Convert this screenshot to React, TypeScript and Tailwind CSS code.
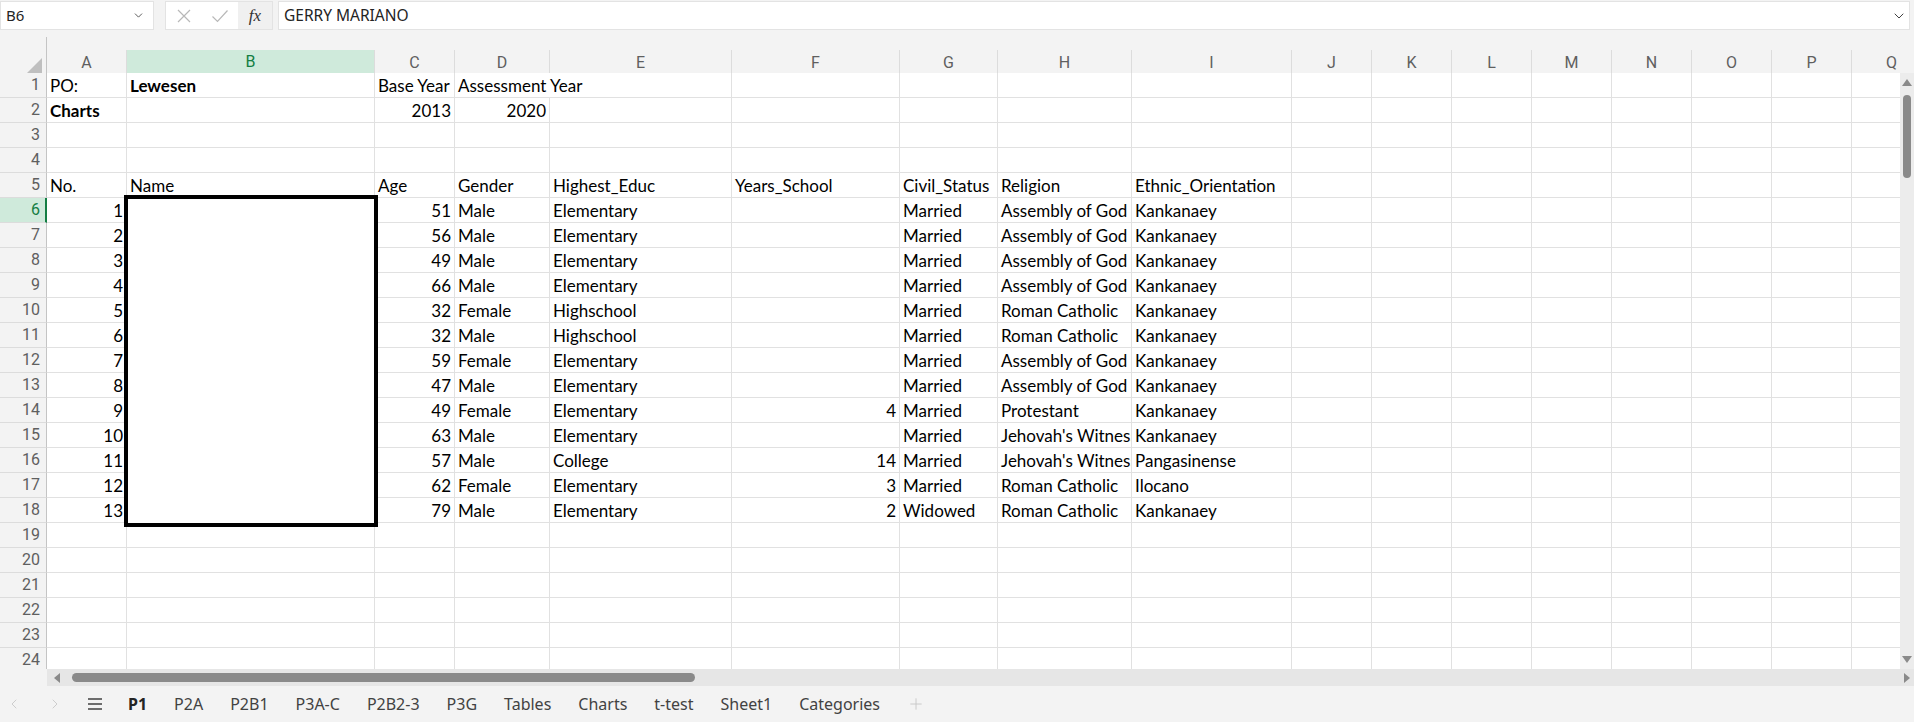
import React from "react";
import { ChevronDown, ChevronLeft, ChevronRight, Plus } from "lucide-react";

const GRID =
  "grid grid-cols-[47px_80px_248px_80px_95px_182px_168px_98px_134px_160px_80px_80px_80px_80px_80px_80px_80px_80px]";

const LETTERS = ["A", "B", "C", "D", "E", "F", "G", "H", "I", "J", "K", "L", "M", "N", "O", "P", "Q"];

type Cell = string;

const people: Cell[][] = [
  ["1", "", "51", "Male", "Elementary", "", "Married", "Assembly of God", "Kankanaey"],
  ["2", "", "56", "Male", "Elementary", "", "Married", "Assembly of God", "Kankanaey"],
  ["3", "", "49", "Male", "Elementary", "", "Married", "Assembly of God", "Kankanaey"],
  ["4", "", "66", "Male", "Elementary", "", "Married", "Assembly of God", "Kankanaey"],
  ["5", "", "32", "Female", "Highschool", "", "Married", "Roman Catholic", "Kankanaey"],
  ["6", "", "32", "Male", "Highschool", "", "Married", "Roman Catholic", "Kankanaey"],
  ["7", "", "59", "Female", "Elementary", "", "Married", "Assembly of God", "Kankanaey"],
  ["8", "", "47", "Male", "Elementary", "", "Married", "Assembly of God", "Kankanaey"],
  ["9", "", "49", "Female", "Elementary", "4", "Married", "Protestant", "Kankanaey"],
  ["10", "", "63", "Male", "Elementary", "", "Married", "Jehovah's Witnesses", "Kankanaey"],
  ["11", "", "57", "Male", "College", "14", "Married", "Jehovah's Witnesses", "Pangasinense"],
  ["12", "", "62", "Female", "Elementary", "3", "Married", "Roman Catholic", "Ilocano"],
  ["13", "", "79", "Male", "Elementary", "2", "Widowed", "Roman Catholic", "Kankanaey"],
];

const rows: Cell[][] = [
  ["PO:", "Lewesen", "Base Year", "Assessment Year"],
  ["Charts", "", "2013", "2020"],
  [],
  [],
  ["No.", "Name", "Age", "Gender", "Highest_Educ", "Years_School", "Civil_Status", "Religion", "Ethnic_Orientation"],
  ...people,
  [],
  [],
  [],
  [],
  [],
  [],
];

const BOLD = new Set(["Lewesen", "Charts"]);

function DataRow({ n, cells }: { n: number; cells: Cell[] }) {
  const active = n === 6;
  return (
    <div className={`${GRID} h-[25px] shrink-0`}>
      <div
        className={
          active
            ? "h-full bg-[#cfeadb] border-r-2 border-r-[#137e43] border-b border-b-[#dcdcdc] flex items-center justify-end pr-[5px] text-[#137e43]"
            : "h-full bg-[#f3f3f3] border-r border-r-[#c4c4c4] border-b border-b-[#dcdcdc] flex items-center justify-end pr-[6px] text-[#5f5f5f]"
        }
        style={{ fontFamily: "Roboto, 'Liberation Sans', sans-serif" }}
      >
        <span className="text-[16px] leading-none">{n}</span>
      </div>
      {LETTERS.map((_, ci) => {
        const t = cells[ci] ?? "";
        const num = /^\d+$/.test(t);
        const overflow = n === 1 && ci === 3;
        return (
          <div
            key={ci}
            className={`h-full border-b border-[#e1e1e1] flex items-end pb-[1px] px-[3px] whitespace-nowrap ${
              overflow ? "overflow-visible" : "border-r overflow-hidden"
            } ${num ? "justify-end" : "justify-start"}`}
          >
            <span className={`text-[17px] leading-[20px] text-black ${BOLD.has(t) ? "font-bold" : ""}`}>{t}</span>
          </div>
        );
      })}
    </div>
  );
}

export default function App() {
  return (
    <div
      className="w-[1914px] h-[722px] bg-[#f3f3f3] flex flex-col overflow-hidden"
      style={{ fontFamily: "Lato, 'Liberation Sans', sans-serif" }}
    >
      {/* Formula bar */}
      <div className="h-[37px] shrink-0 flex items-start pt-[1px]">
        <div className="w-[154px] h-[29px] bg-white border border-[#e3e3e3] flex items-center justify-between pl-[5px] pr-[8px]">
          <span className="text-[15px] text-[#242424]" style={{ fontFamily: "'Noto Sans', sans-serif" }}>
            B6
          </span>
          <ChevronDown size={13} strokeWidth={1.6} color="#444" />
        </div>
        <div className="ml-[11px] w-[108px] h-[29px] bg-white border border-[#e3e3e3] flex items-center">
          <div className="w-[36px] flex justify-center">
            <svg width="16" height="16" viewBox="0 0 16 16">
              <path d="M2 2 L14 14 M14 2 L2 14" stroke="#b8b8b8" strokeWidth="1.2" fill="none" />
            </svg>
          </div>
          <div className="w-[36px] flex justify-center">
            <svg width="18" height="16" viewBox="0 0 18 16">
              <path d="M1.5 8.5 L6.5 13.5 L16.5 2.5" stroke="#b8b8b8" strokeWidth="1.2" fill="none" />
            </svg>
          </div>
          <div className="flex-1 h-full bg-[#f0f0f0] flex items-center justify-center">
            <span className="italic text-[17px] text-[#333]" style={{ fontFamily: "'Liberation Serif', serif" }}>
              fx
            </span>
          </div>
        </div>
        <div className="ml-[5px] flex-1 mr-[4px] h-[29px] bg-white border border-[#e3e3e3] flex items-center justify-between pl-[5px] pr-[2px]">
          <span className="text-[15.5px] text-[#242424]" style={{ fontFamily: "'Noto Sans', sans-serif" }}>
            GERRY MARIANO
          </span>
          <ChevronDown size={16} strokeWidth={1.4} color="#333" />
        </div>
      </div>

      {/* Column headers */}
      <div className="h-[36px] shrink-0 w-full overflow-hidden">
        <div className={`${GRID} h-full`} style={{ fontFamily: "Roboto, 'Liberation Sans', sans-serif" }}>
          <div className="h-full border-r border-[#c4c4c4] border-b border-b-[#bdbdbd] relative">
            <svg className="absolute right-[4px] bottom-[2px]" width="15" height="15" viewBox="0 0 15 15">
              <polygon points="15,0 15,15 0,15" fill="#bfbfbf" />
            </svg>
          </div>
          {LETTERS.map((l) => (
            <div key={l} className="h-full flex flex-col border-b border-[#bdbdbd]">
              <div className="h-[13px]" />
              {l === "B" ? (
                <div className="flex-1 bg-[#cfeadb] border-b-2 border-[#137e43] -mb-[1px] border-r border-r-[#dcdcdc] flex items-center justify-center text-[16px] text-[#137e43]">
                  {l}
                </div>
              ) : (
                <div className="flex-1 border-r border-[#dcdcdc] flex items-center justify-center text-[16px] text-[#5f5f5f]">
                  {l}
                </div>
              )}
            </div>
          ))}
        </div>
      </div>

      {/* Sheet body */}
      <div className="h-[596px] shrink-0 flex">
        <div className="w-[1900px] h-full overflow-hidden bg-white relative">
          {rows.map((cells, i) => (
            <DataRow key={i} n={i + 1} cells={cells} />
          ))}
          <div className="absolute left-[124px] top-[122px] w-[254px] h-[332px] border-4 border-black bg-white" />
        </div>
        <div className="w-[14px] h-full bg-[#ececec] flex flex-col items-center">
          <svg className="mt-[6px]" width="10" height="7" viewBox="0 0 10 7">
            <polygon points="5,0 10,7 0,7" fill="#8a8a8a" />
          </svg>
          <div className="mt-[9px] w-[8px] h-[83px] rounded-full bg-[#8a8a8a]" />
          <div className="flex-1" />
          <svg className="mb-[6px]" width="10" height="7" viewBox="0 0 10 7">
            <polygon points="0,0 10,0 5,7" fill="#8a8a8a" />
          </svg>
        </div>
      </div>

      {/* Horizontal scrollbar */}
      <div className="h-[17px] shrink-0 flex">
        <div className="w-[47px]" />
        <div className="flex-1 bg-[#e6e6e6] flex items-center">
          <svg className="ml-[7px]" width="6" height="10" viewBox="0 0 6 10">
            <polygon points="0,5 6,0 6,10" fill="#8a8a8a" />
          </svg>
          <div className="ml-[12px] w-[623px] h-[9px] rounded-full bg-[#8a8a8a]" />
          <div className="flex-1" />
          <svg className="mr-[4px]" width="6" height="10" viewBox="0 0 6 10">
            <polygon points="6,5 0,0 0,10" fill="#8a8a8a" />
          </svg>
        </div>
      </div>

      {/* Sheet tabs */}
      <div
        className="h-[36px] shrink-0 flex items-center pl-[6px] text-[16px] text-[#424242]"
        style={{ fontFamily: "'Noto Sans', sans-serif" }}
      >
        <ChevronLeft size={16} strokeWidth={1.3} color="#c6c6c6" />
        <ChevronRight size={16} strokeWidth={1.3} color="#c6c6c6" className="ml-[25px]" />
        <svg className="ml-[23px]" width="18" height="14" viewBox="0 0 18 14">
          <path d="M2 2 H16 M2 7 H16 M2 12 H16" stroke="#424242" strokeWidth="1.6" />
        </svg>
        <div className="ml-[24px] flex items-center gap-[27px]">
          <span className="font-bold text-[#242424]">P1</span>
          <span>P2A</span>
          <span>P2B1</span>
          <span>P3A-C</span>
          <span>P2B2-3</span>
          <span>P3G</span>
          <span>Tables</span>
          <span>Charts</span>
          <span>t-test</span>
          <span>Sheet1</span>
          <span>Categories</span>
          <Plus size={18} strokeWidth={1.2} color="#c6c6c6" />
        </div>
      </div>
    </div>
  );
}
